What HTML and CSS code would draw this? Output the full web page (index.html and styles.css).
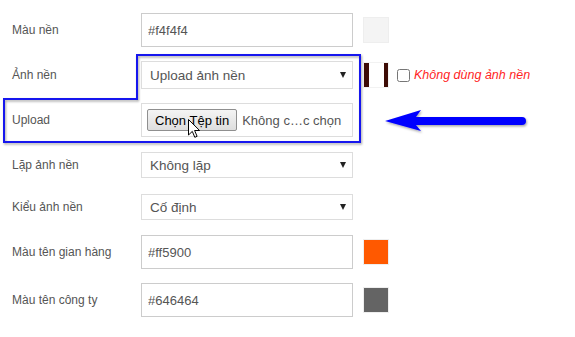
FILE: index.html
```html
<!DOCTYPE html>
<html lang="vi">
<head>
    <meta charset="UTF-8">
    <meta name="viewport" content="width=device-width, initial-scale=1.0">
    <title>Cấu hình gian hàng</title>
    <link rel="stylesheet" href="styles.css">
</head>
<body>
    <div class="settings">
        <!-- Màu nền -->
        <div class="row">
            <label class="row-label" for="bgColor">Màu nền</label>
            <input type="text" id="bgColor" class="form-control" value="#f4f4f4">
            <span class="swatch swatch-light"></span>
        </div>

        <!-- Ảnh nền -->
        <div class="row row-short">
            <label class="row-label" for="bgImage">Ảnh nền</label>
            <div class="select-wrap select-tall">
                <select id="bgImage" class="form-select">
                    <option>Upload ảnh nền</option>
                </select>
            </div>
            <span class="swatch swatch-image"></span>
            <label class="no-image">
                <input type="checkbox">
                <span>Không dùng ảnh nền</span>
            </label>
        </div>

        <!-- Upload -->
        <div class="row">
            <label class="row-label" for="bgFile">Upload</label>
            <div class="file-box">
                <button type="button" class="file-btn">Chọn Tệp tin</button>
                <span class="file-name">Không c…c chọn</span>
                <svg class="cursor" width="13" height="20" viewBox="0 0 13 20">
                    <path d="M0.5 0.5 L0.5 16 L4.3 12.4 L6.8 18.3 L9.1 17.3 L6.6 11.5 L11.6 11.5 Z" fill="#fff" stroke="#000" stroke-width="1"/>
                </svg>
            </div>
        </div>

        <!-- Lặp ảnh nền -->
        <div class="row row-short">
            <label class="row-label" for="bgRepeat">Lặp ảnh nền</label>
            <div class="select-wrap">
                <select id="bgRepeat" class="form-select">
                    <option>Không lặp</option>
                </select>
            </div>
        </div>

        <!-- Kiểu ảnh nền -->
        <div class="row row-short">
            <label class="row-label" for="bgAttach">Kiểu ảnh nền</label>
            <div class="select-wrap">
                <select id="bgAttach" class="form-select">
                    <option>Cố định</option>
                </select>
            </div>
        </div>

        <!-- Màu tên gian hàng -->
        <div class="row">
            <label class="row-label" for="shopColor">Màu tên gian hàng</label>
            <input type="text" id="shopColor" class="form-control" value="#ff5900">
            <span class="swatch swatch-orange"></span>
        </div>

        <!-- Màu tên công ty -->
        <div class="row">
            <label class="row-label" for="companyColor">Màu tên công ty</label>
            <input type="text" id="companyColor" class="form-control" value="#646464">
            <span class="swatch swatch-grey"></span>
        </div>

        <!-- chú thích: khung xanh + mũi tên -->
        <svg class="callout" width="575" height="337" viewBox="0 0 575 337">
            <defs>
                <filter id="shadow" x="-5%" y="-20%" width="110%" height="140%">
                    <feDropShadow dx="1" dy="1.5" stdDeviation="1" flood-color="#000" flood-opacity="0.35"/>
                </filter>
            </defs>
            <path d="M137 55 H360 V142 H4 V99 H137 Z" fill="none" stroke="#1515ee" stroke-width="2" filter="url(#shadow)"/>
            <g filter="url(#shadow)">
                <path d="M385 121 L421 110 L416 117 H522 A4 4 0 0 1 522 125 H416 L421 131 Z" fill="#0000ff"/>
            </g>
        </svg>
    </div>
</body>
</html>
```

FILE: styles.css
```css
body {
    font-family: "Liberation Sans", Arial, sans-serif;
    background-color: #fff;
    margin: 0;
    padding: 0;
}

.settings {
    position: relative;
    display: flex;
    flex-direction: column;
    gap: 14px;
    padding: 13px 0 0 12px;
    width: 575px;
    height: 337px;
    box-sizing: border-box;
}

.row {
    display: flex;
    align-items: center;
    height: 34px;
}

.row-short {
    height: 28px;
}

.row-label {
    width: 129px;
    flex-shrink: 0;
    font-size: 12px;
    color: #555;
}

.form-control {
    width: 212px;
    height: 34px;
    box-sizing: border-box;
    padding: 0 6px;
    font-family: inherit;
    font-size: 13px;
    color: #555;
    border: 1px solid #ccc;
    border-radius: 0;
    margin: 0;
    outline: none;
}

.select-wrap {
    position: relative;
    width: 212px;
    height: 26px;
}

.select-wrap.select-tall {
    height: 28px;
}

.select-wrap::after {
    content: "";
    position: absolute;
    right: 7px;
    top: 50%;
    margin-top: -3px;
    border-left: 3.5px solid transparent;
    border-right: 3.5px solid transparent;
    border-top: 6px solid #222;
}

.form-select {
    appearance: none;
    -webkit-appearance: none;
    width: 100%;
    height: 100%;
    box-sizing: border-box;
    margin: 0;
    padding: 0 8px;
    font-family: inherit;
    font-size: 13.5px;
    color: #555;
    background: #fff;
    border: 1px solid #ddd;
    border-radius: 0;
    outline: none;
}

.swatch {
    width: 26px;
    height: 26px;
    box-sizing: border-box;
    margin-left: 10px;
    border: 1px solid #eee;
}

.swatch-light {
    background-color: #f4f4f4;
}

.swatch-orange {
    background-color: #ff5900;
}

.swatch-grey {
    background-color: #646464;
}

.swatch-image {
    background: linear-gradient(to right, #3d0c06 0, #3d0c06 5px, #fff 5px, #fff 20px, #3d0c06 20px);
    border-color: #f2f2f2;
}

.no-image {
    display: flex;
    align-items: center;
    margin-left: 6px;
    font-size: 12.5px;
    font-style: italic;
    color: #ff1f1f;
}

.no-image input {
    width: 13px;
    height: 13px;
    margin: 0 4px 0 2px;
}

.file-box {
    position: relative;
    display: flex;
    align-items: center;
    width: 212px;
    height: 34px;
    box-sizing: border-box;
    padding-left: 5px;
    border: 1px solid #ddd;
}

.file-btn {
    height: 22px;
    padding: 0 7px;
    font-family: inherit;
    font-size: 13px;
    color: #000;
    background: linear-gradient(#f4f4f4, #dedede);
    border: 1px solid #8f8f8f;
    border-radius: 2px;
}

.file-name {
    margin-left: 5px;
    font-size: 13px;
    color: #555;
    white-space: nowrap;
}

.cursor {
    position: absolute;
    left: 46px;
    top: 15px;
}

.callout {
    position: absolute;
    left: 0;
    top: 0;
    pointer-events: none;
}
```
